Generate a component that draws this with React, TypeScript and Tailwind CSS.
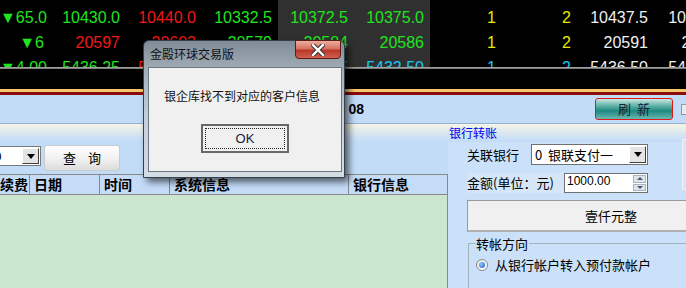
import React from "react";

const G = "text-[#1fe41f]";
const R = "text-[#f01818]";
const Y = "text-[#e8e800]";
const W = "text-[#f0f0f0]";
const C = "text-[#18c8f0]";

type Cell = [string, string];
type Col = { w: string; pr: string; bg: string; cells: Cell[] };

// ticker columns, laid out column by column so the grey columns fill the full height
const columns: Col[] = [
  { w: "w-[48px]", pr: "pr-[4px]", bg: "", cells: [["▼65.0", G], ["▼6", G], ["▼4.00", G]] },
  { w: "w-[76px]", pr: "pr-[4px]", bg: "", cells: [["10430.0", G], ["20597", R], ["5436.25", G]] },
  { w: "w-[76px]", pr: "pr-[4px]", bg: "", cells: [["10440.0", R], ["20603", R], ["5440.00", R]] },
  { w: "w-[78px]", pr: "pr-[6px]", bg: "", cells: [["10332.5", G], ["20579", G], ["5430.75", G]] },
  { w: "w-[76px]", pr: "pr-[6px]", bg: "bg-[#303030]", cells: [["10372.5", G], ["20584", G], ["5432.25", G]] },
  { w: "w-[76px]", pr: "pr-[6px]", bg: "bg-[#303030]", cells: [["10375.0", G], ["20586", G], ["5432.50", C]] },
  { w: "w-[70px]", pr: "pr-[4px]", bg: "", cells: [["1", Y], ["1", Y], ["1", C]] },
  { w: "w-[75px]", pr: "pr-[4px]", bg: "", cells: [["2", Y], ["2", Y], ["2", C]] },
  { w: "w-[77px]", pr: "pr-[4px]", bg: "", cells: [["10437.5", W], ["20591", W], ["5436.50", W]] },
  { w: "w-[78px]", pr: "pr-[4px]", bg: "", cells: [["10440.0", W], ["20595", W], ["5437.00", W]] },
];

function Ticker() {
  return (
    <div className="flex h-[67px] overflow-hidden bg-black text-[16px] font-['Liberation_Sans','DejaVu_Sans',sans-serif]">
      {columns.map((col, i) => (
        <div key={i} className={`${col.w} ${col.pr} ${col.bg} shrink-0 pt-[5px] text-right`}>
          {col.cells.map(([t, c], j) => (
            <div key={j} className={`${c} h-[25px] leading-[25px] whitespace-nowrap`}>
              {t}
            </div>
          ))}
        </div>
      ))}
    </div>
  );
}

function DropButton({ className }: { className: string }) {
  return (
    <div
      className={`${className} shrink-0 flex items-center justify-center border border-t-white border-l-white border-r-[#404040] border-b-[#404040] bg-[#e4e4e4]`}
    >
      <svg width="8" height="5" viewBox="0 0 8 5">
        <path d="M0 0h8L4 5z" fill="#000" />
      </svg>
    </div>
  );
}

function Dialog() {
  return (
    <div className="absolute left-[143px] top-[40px] w-[202px] h-[138px] rounded-t-[6px] border border-[#36404a] bg-[linear-gradient(180deg,#7f8b97_0%,#a4aeb8_22%,#c4ced8_55%,#d4dce4_100%)] shadow-[4px_4px_7px_rgba(0,0,0,0.6)] flex flex-col">
      <div className="relative h-[26px] shrink-0 pl-[6px] pt-[6px] text-[12px] leading-[14px] text-[#111] font-['Noto_Sans_CJK_SC',sans-serif]">
        金殿环球交易版
        <div className="absolute right-[3px] -top-px w-[46px] h-[19px] rounded-b-[4px] border border-[#5a1c14] bg-[linear-gradient(180deg,#eab0a0_0%,#d87060_45%,#b83828_55%,#d06050_100%)] flex items-center justify-center">
          <svg width="14" height="12" viewBox="0 0 14 12">
            <path d="M2 1l10 10M12 1L2 11" stroke="#3a3a3a" strokeWidth="4.5" strokeLinecap="square" />
            <path d="M2 1l10 10M12 1L2 11" stroke="#fff" strokeWidth="2.4" strokeLinecap="square" />
          </svg>
        </div>
      </div>
      <div className="flex-1 ml-[4px] mr-[2px] mb-[5px] border border-[#6c7680] bg-[#f0f0f0] flex flex-col">
        <div className="pl-[15px] pt-[20px] text-[12px] leading-[16px] text-[#111] font-['Noto_Sans_CJK_SC',sans-serif]">
          银企库找不到对应的客户信息
        </div>
        <div className="ml-[52px] mt-[20px] w-[88px] h-[29px] border-2 border-[#686868] bg-[#f0f0f0] p-[2px]">
          <div className="w-full h-full border border-dotted border-[#222] flex items-center justify-center text-[13px] text-[#1a1a3a] font-['Liberation_Sans',sans-serif]">
            OK
          </div>
        </div>
      </div>
    </div>
  );
}

export default function App() {
  return (
    <div className="relative w-[686px] h-[288px] overflow-hidden bg-black font-['Liberation_Sans','Noto_Sans_CJK_SC',sans-serif]">
      <Ticker />
      <div className="h-[2px] bg-[linear-gradient(180deg,#b0b0b0,#6c6c6c)]" />
      <div className="h-[20px] bg-black" />
      <div className="h-[3px] bg-[#f4c86a]" />
      <div className="h-[3px] bg-[#8c0c0c]" />

      {/* main panel */}
      <div className="h-[193px] bg-[#c2dcf8] flex flex-col">
        {/* status bar */}
        <div className="h-[28px] flex items-center shrink-0">
          <div className="w-[364px] shrink-0 text-right text-[14px] font-bold text-black whitespace-nowrap">
            2013-05&nbsp;&nbsp;08
          </div>
          <div className="ml-[231px] w-[78px] h-[22px] shrink-0 rounded-[3px] border border-[#e01818] bg-[linear-gradient(180deg,#c8e8e2_0%,#5eb0a6_35%,#1e8a80_60%,#6ab8b0_100%)] flex items-center justify-center text-[13px] text-[#10203a] font-['Noto_Sans_CJK_SC',sans-serif] tracking-[6px] pl-[6px]">
            刷新
          </div>
          <div className="ml-[8px] w-[12px] h-[11px] border border-[#8a9aa8] bg-[#e8ecf0] shrink-0" />
        </div>
        <div className="h-px bg-[#92b0d6] shrink-0" />

        <div className="flex-1 flex bg-[linear-gradient(180deg,#f6f6e4_0px,#dde8ee_8px,#c2dcf8_17px,#c2dcf8_100%)] font-['Noto_Sans_CJK_SC',sans-serif]">
          {/* left: query + table */}
          <div className="w-[448px] shrink-0 flex flex-col">
            <div className="h-[21px]" />
            <div className="h-[26px] flex items-start">
              <div className="-ml-[16px] mt-[1px] w-[57px] h-[20px] shrink-0 border border-[#7a7a7a] bg-white flex items-center">
                <span className="flex-1 pl-[2px] text-[13px] leading-none text-black font-['Liberation_Sans',sans-serif]">30</span>
                <DropButton className="w-[17px] h-[16px] mr-px" />
              </div>
              <div className="ml-[3px] w-[76px] h-[26px] shrink-0 rounded-[3px] border border-[#c8ccd0] bg-[linear-gradient(180deg,#ffffff_0%,#f2f2f2_50%,#dcdcdc_100%)] flex items-center justify-center text-[13px] text-black tracking-[12px] pl-[12px]">
                查询
              </div>
            </div>
            <div className="mt-[3px] h-[21px] flex border-t border-b border-[#888] bg-[#c4dcf8] text-[14px] font-bold text-black leading-[19px]">
              <div className="w-[30px] shrink-0 border-r border-[#888] whitespace-nowrap overflow-hidden">续费</div>
              <div className="w-[70px] shrink-0 border-r border-[#888] pl-[4px]">日期</div>
              <div className="w-[70px] shrink-0 border-r border-[#888] pl-[4px]">时间</div>
              <div className="w-[179px] shrink-0 border-r border-[#888] pl-[4px]">系统信息</div>
              <div className="w-[99px] shrink-0 border-r border-[#888] pl-[4px]">银行信息</div>
            </div>
            <div className="flex-1 bg-[#cbe6cf] border-r border-[#888]" />
          </div>

          {/* right: bank transfer */}
          <div className="flex-1 flex flex-col">
            <div className="h-[18px] pl-[1px] pt-[1px] text-[12px] leading-[16px] text-[#0000ee]">银行转账</div>
            <div className="flex-1 pl-[19px] bg-[#cbe1f9] flex flex-col">
              <div className="flex items-start">
                <div className="w-[215px] shrink-0">
                  <div className="mt-[2px] h-[21px] flex items-center">
                    <span className="w-[64px] shrink-0 text-[13px] text-black">关联银行</span>
                    <div className="w-[117px] h-[21px] shrink-0 border border-[#707070] bg-white flex items-center">
                      <span className="flex-1 pl-[3px] text-[13px] leading-none text-black whitespace-nowrap">0&nbsp; 银联支付一</span>
                      <DropButton className="w-[17px] h-[17px] mr-px" />
                    </div>
                  </div>
                  <div className="mt-[8px] h-[20px] flex items-center">
                    <span className="w-[97px] shrink-0 text-[13px] text-black whitespace-nowrap bg-[#d4e6f8]">金额(单位：元)</span>
                    <div className="w-[84px] h-[20px] shrink-0 border border-[#707070] bg-white flex">
                      <span className="flex-1 pl-[2px] text-[12px] leading-[15px] text-black font-['Liberation_Sans',sans-serif]">1000.00</span>
                      <div className="w-[13px] flex flex-col gap-px py-px mr-px">
                        <div className="flex-1 bg-[#dde6ee] border border-[#aab4be] flex items-center justify-center">
                          <svg width="6" height="3" viewBox="0 0 6 3"><path d="M0 3h6L3 0z" fill="#4a5a6a" /></svg>
                        </div>
                        <div className="flex-1 bg-[#dde6ee] border border-[#aab4be] flex items-center justify-center">
                          <svg width="6" height="3" viewBox="0 0 6 3"><path d="M0 0h6L3 3z" fill="#4a5a6a" /></svg>
                        </div>
                      </div>
                    </div>
                  </div>
                </div>
                <div className="-mt-[3px] w-[20px] h-[51px] shrink-0 border border-r-0 border-[#eef2f6] bg-[#d4e6fa]" />
              </div>
              <div className="mt-[7px] w-[288px] h-[32px] shrink-0 border border-[#9a9a9a] border-b-2 border-b-[#b0b0b0] bg-[#f0f0f0] flex items-center justify-center text-[13px] text-black">
                壹仟元整
              </div>
              <fieldset className="mt-[4px] flex-1 border-t border-l border-[#a4b2c0] ml-px">
                <legend className="ml-[6px] px-px text-[13px] leading-[15px] text-black">转帐方向</legend>
                <div className="mt-[4px] ml-[7px] flex items-center">
                  <div className="w-[12px] h-[12px] shrink-0 rounded-full border border-[#8a8a8a] bg-[linear-gradient(135deg,#e8e8e8,#ffffff)] flex items-center justify-center">
                    <div className="w-[6px] h-[6px] rounded-full bg-[radial-gradient(circle_at_35%_35%,#8ec8ff,#1c5cb8)]" />
                  </div>
                  <span className="ml-[7px] text-[13px] text-black whitespace-nowrap">从银行帐户转入预付款帐户</span>
                </div>
              </fieldset>
            </div>
          </div>
        </div>
      </div>

      <Dialog />
    </div>
  );
}
